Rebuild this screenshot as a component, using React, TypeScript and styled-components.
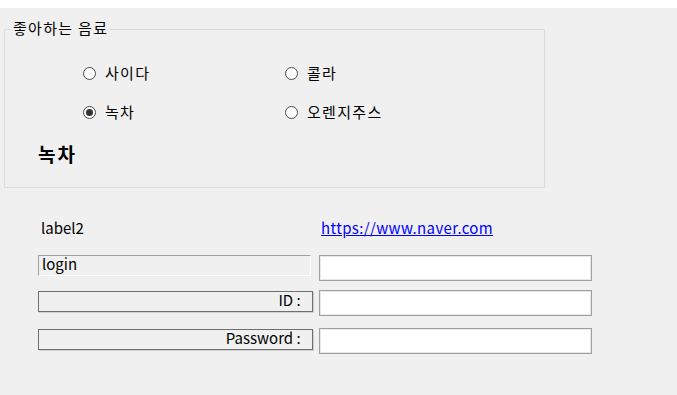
import React from "react";
import styled, { createGlobalStyle } from "styled-components";

const Global = createGlobalStyle`
  html, body { margin: 0; padding: 0; background: #f0f0f0; }
  body {
    font-family: "Noto Sans CJK KR", "Noto Sans", sans-serif;
    font-size: 15px;
    color: #000;
  }
`;

const Page = styled.div`
  width: 677px;
  height: 395px;
  background: #f0f0f0;
  display: flex;
  flex-direction: column;
  overflow: hidden;
`;

const TopStrip = styled.div`
  height: 8px;
  background: #ffffff;
  flex: none;
`;

const Group = styled.fieldset`
  box-sizing: border-box;
  width: 541px;
  margin: 11px 0 0 4px;
  padding: 23px 0 21px 6px;
  border: 1px solid #dcdcdc;
  min-width: 0;
`;

const Legend = styled.legend`
  margin: 0;
  padding: 0 1px 3px 2px;
  font-size: 15px;
  line-height: 18px;
  letter-spacing: 1.3px;
`;

const RadioGrid = styled.div`
  display: grid;
  grid-template-columns: 202px auto;
  row-gap: 19px;
  margin-left: 72px;
`;

const RadioItem = styled.label`
  display: flex;
  align-items: center;
  gap: 9px;
  height: 20px;
  line-height: 20px;
  letter-spacing: 1.3px;
`;

const Circle = styled.span<{ $checked?: boolean }>`
  box-sizing: border-box;
  width: 13px;
  height: 13px;
  border-radius: 50%;
  border: 1px solid #4a4a4a;
  background: #fff;
  display: flex;
  align-items: center;
  justify-content: center;
  flex: none;
  &::after {
    content: "";
    width: 7px;
    height: 7px;
    border-radius: 50%;
    background: ${(p) => (p.$checked ? "#333" : "transparent")};
  }
`;

const BigLabel = styled.div`
  margin: 20px 0 0 27px;
  font-size: 19px;
  font-weight: 700;
  line-height: 24px;
  letter-spacing: 2px;
`;

const Form = styled.div`
  margin: 31px 0 0 38px;
  display: flex;
  flex-direction: column;
`;

const Row = styled.div<{ $mt: number }>`
  display: grid;
  grid-template-columns: 275px 273px;
  column-gap: 6px;
  align-items: start;
  margin-top: ${(p) => p.$mt}px;
`;

const PlainLabel = styled.div`
  padding-left: 3px;
  line-height: 18px;
`;

const Link = styled.a`
  padding-left: 2px;
  line-height: 18px;
  color: #0000ff;
  text-decoration: underline;
  letter-spacing: 0.35px;
`;

const SunkenLabel = styled.div`
  box-sizing: border-box;
  width: 273px;
  height: 21px;
  border-top: 1px solid #a0a0a0;
  border-left: 1px solid #a0a0a0;
  border-bottom: 1px solid #ffffff;
  border-right: 1px solid #ffffff;
  padding-left: 3px;
  line-height: 15px;
`;

const BoxLabel = styled.div`
  box-sizing: border-box;
  width: 275px;
  height: 21px;
  margin-top: 1px;
  border: 1px solid #6e6e6e;
  box-shadow: 1px 1px 0 #d0d0d0;
  text-align: right;
  padding-right: 8px;
  line-height: 15px;
  white-space: pre;
`;

const Input = styled.input`
  box-sizing: border-box;
  width: 273px;
  height: 26px;
  margin: 0;
  border: 1px solid #a0a0a0;
  box-shadow: inset 0 0 0 1px #e8e8e8;
  background: #fff;
  outline: none;
  font: inherit;
`;

export default function App() {
  return (
    <>
      <Global />
      <Page>
        <TopStrip />
        <Group>
          <Legend>좋아하는 음료</Legend>
          <RadioGrid>
            <RadioItem>
              <Circle />
              사이다
            </RadioItem>
            <RadioItem>
              <Circle />
              콜라
            </RadioItem>
            <RadioItem>
              <Circle $checked />
              녹차
            </RadioItem>
            <RadioItem>
              <Circle />
              오렌지주스
            </RadioItem>
          </RadioGrid>
          <BigLabel>녹차</BigLabel>
        </Group>
        <Form>
          <Row $mt={0}>
            <PlainLabel>label2</PlainLabel>
            <Link href="#">https://www.naver.com</Link>
          </Row>
          <Row $mt={18}>
            <SunkenLabel>login</SunkenLabel>
            <Input />
          </Row>
          <Row $mt={9}>
            <BoxLabel>{"ID : "}</BoxLabel>
            <Input />
          </Row>
          <Row $mt={12}>
            <BoxLabel>{"Password : "}</BoxLabel>
            <Input />
          </Row>
        </Form>
      </Page>
    </>
  );
}
